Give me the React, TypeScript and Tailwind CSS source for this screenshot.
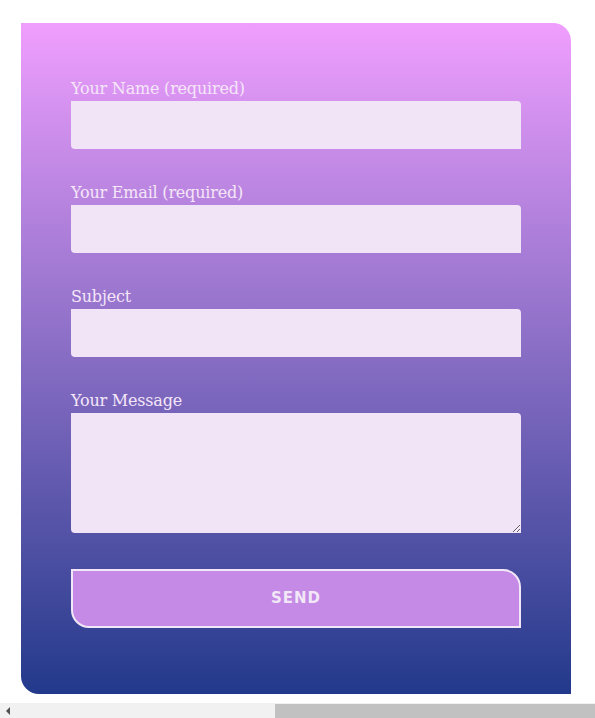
const fields = [
  { label: 'Your Name (required)', type: 'text' },
  { label: 'Your Email (required)', type: 'email' },
  { label: 'Subject', type: 'text' },
];

const labelCls =
  "block h-6 text-[16px] leading-6 text-[#f5e6f8] font-['DejaVu_Serif',serif] tracking-[-0.2px]";
const inputCls =
  'block w-full bg-[#f0e4f6] rounded-tr-[4px] rounded-bl-[4px] outline-none px-3';

const ContactForm = () => {
  return (
    <form
      className="w-[550px] px-[50px] pt-[54px] pb-[66px] rounded-tr-[18px] rounded-bl-[18px] bg-gradient-to-b from-[#f09efe] to-[#22398b]"
      onSubmit={(e) => e.preventDefault()}
    >
      {fields.map((field) => (
        <div key={field.label} className="mb-8">
          <label className={labelCls}>{field.label}</label>
          <input type={field.type} className={`${inputCls} h-12`} />
        </div>
      ))}
      <div className="mb-9">
        <label className={labelCls}>Your Message</label>
        <textarea className={`${inputCls} h-[120px] py-2`} />
      </div>
      <button
        type="submit"
        className="block w-full h-[59px] border-2 border-[#f1e7f6] bg-[#c589e6] rounded-tr-[18px] rounded-bl-[18px] text-[#f1e7f6] text-[15px] font-bold tracking-[1px] font-['DejaVu_Sans',sans-serif]"
      >
        SEND
      </button>
    </form>
  );
};

// horizontal scrollbar strip along the bottom of the window
const ScrollStrip = () => (
  <div className="flex h-[15px] w-full bg-[#f1f1f1]">
    <div className="flex w-[15px] items-center justify-center">
      <div className="h-0 w-0 border-y-[4px] border-r-[4px] border-y-transparent border-r-[#505050]" />
    </div>
    <div className="w-[260px]" />
    <div className="flex-1 bg-[#c1c1c1] mt-[1px]" />
  </div>
);

export default function App() {
  return (
    <div className="w-[595px] overflow-hidden">
      <div className="pt-[23px] pb-[9px] pl-[21px]">
        <ContactForm />
      </div>
      <ScrollStrip />
    </div>
  );
}
